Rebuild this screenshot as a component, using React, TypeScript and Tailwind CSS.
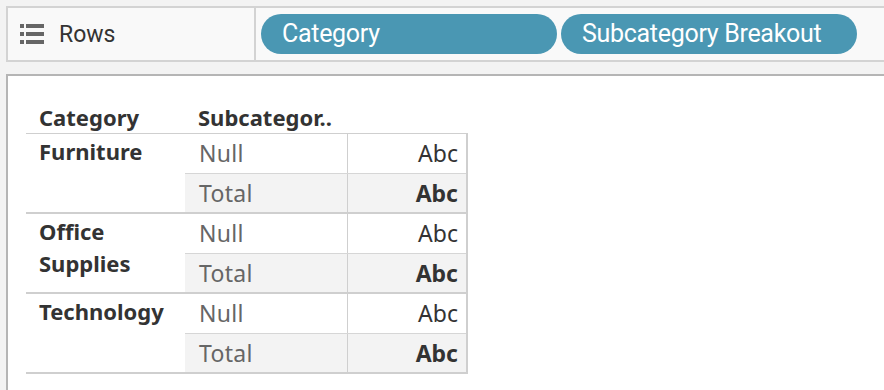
const groups = [
  { label: "Furniture" },
  { label: "Office Supplies" },
  { label: "Technology" },
];

function RowsIcon() {
  return (
    <svg width="24" height="20" viewBox="0 0 24 20" className="shrink-0">
      <rect x="0" y="0" width="4" height="4" fill="#666" />
      <rect x="6" y="0" width="18" height="4" fill="#666" />
      <rect x="0" y="8" width="4" height="4" fill="#666" />
      <rect x="6" y="8" width="18" height="4" fill="#666" />
      <rect x="0" y="16" width="4" height="4" fill="#666" />
      <rect x="6" y="16" width="18" height="4" fill="#666" />
    </svg>
  );
}

function Pill({ label }: { label: string }) {
  return (
    <div className="w-[296px] h-[40px] rounded-full bg-[#4a97b3] text-white flex items-center pl-[21px] text-[25px] font-['Roboto',sans-serif] tracking-[-0.3px]">
      {label}
    </div>
  );
}

export default function App() {
  return (
    <div className="w-[884px] h-[390px] bg-[#f3f3f3] overflow-hidden font-['Noto_Sans',sans-serif]">
      {/* Rows shelf */}
      <div className="mt-[6px] ml-[6px] w-[900px] h-[56px] border-2 border-[#d3d3d3] bg-[#f9f9f9] flex items-center">
        <div className="w-[248px] h-full flex items-center pl-[12px] gap-[15px] border-r-2 border-[#d3d3d3]">
          <RowsIcon />
          <span className="text-[23px] text-[#333] font-['Roboto',sans-serif] pt-[2px]">Rows</span>
        </div>
        <div className="flex items-center gap-[4px] pl-[5px]">
          <Pill label="Category" />
          <Pill label="Subcategory Breakout" />
        </div>
      </div>

      {/* View */}
      <div className="mt-[12px] ml-[6px] w-[900px] h-[400px] border-t-2 border-l-2 border-[#b5b5b5] bg-white pt-[24px] pl-[18px]">
        <div className="w-[442px]">
          <div className="h-[34px] flex items-end border-b border-[#cfcfcf] text-[22px] font-bold text-[#333] leading-[32px]">
            <div className="w-[159px] pl-[13px]">Category</div>
            <div className="pl-[13px]">Subcategor..</div>
          </div>
          <div className="border-r-2 border-[#cfcfcf]">
            {groups.map((g) => (
              <div key={g.label} className="flex border-b-2 border-[#cfcfcf]">
                <div className="w-[159px] pl-[13px] pr-[8px] pt-[1px] text-[22px] font-bold text-[#333] leading-[32px]">
                  {g.label}
                </div>
                <div className="flex-1">
                  <div className="h-[39px] flex items-center text-[23px]">
                    <div className="w-[162px] pl-[14px] text-[#666] tracking-[0.3px]">Null</div>
                    <div className="flex-1 h-full flex items-center justify-end pr-[8px] border-l border-[#cfcfcf] text-[#333]">
                      Abc
                    </div>
                  </div>
                  <div className="h-[39px] flex items-center text-[23px] bg-[#f3f3f3] border-t border-[#d6d6d6]">
                    <div className="w-[162px] pl-[14px] text-[#666] tracking-[0.3px]">Total</div>
                    <div className="flex-1 h-full flex items-center justify-end pr-[8px] border-l border-[#cfcfcf] text-[#333] font-bold">
                      Abc
                    </div>
                  </div>
                </div>
              </div>
            ))}
          </div>
        </div>
      </div>
    </div>
  );
}
